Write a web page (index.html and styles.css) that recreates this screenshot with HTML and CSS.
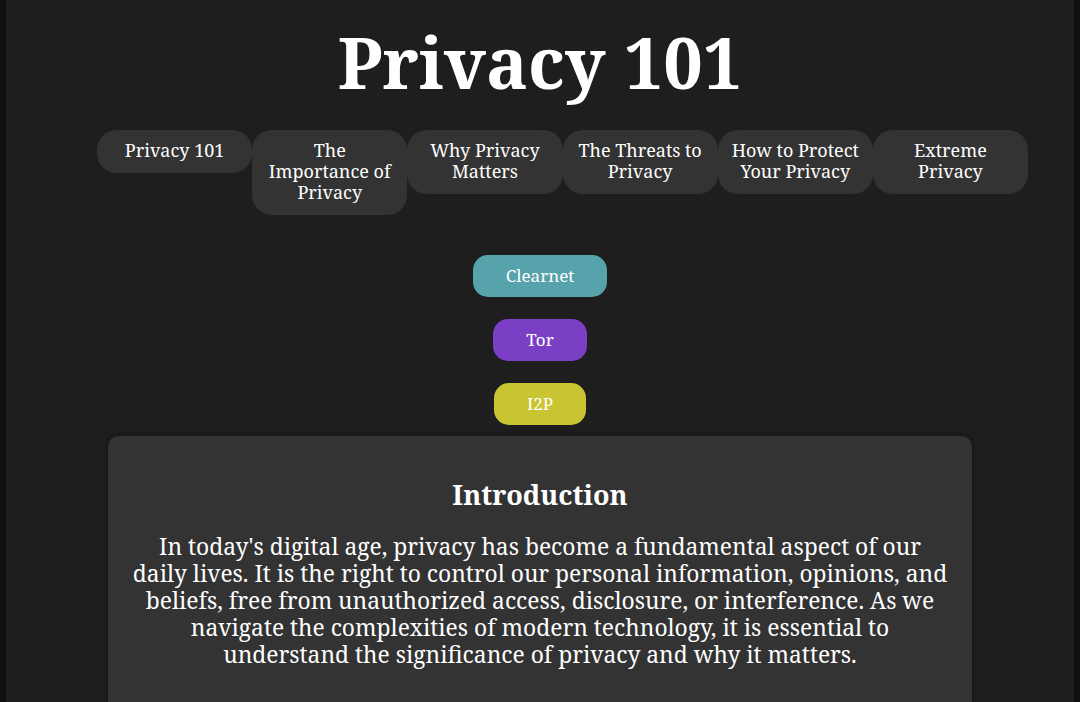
FILE: index.html
```html
<!DOCTYPE html>
<html lang="en">
<head>
<meta charset="utf-8">
<title>Privacy 101</title>
<link rel="stylesheet" href="styles.css">
</head>
<body>
<div class="page">
  <header class="header">
    <h1 class="title">Privacy 101</h1>
    <nav class="nav">
      <a class="nav-item" href="#">Privacy 101</a>
      <a class="nav-item" href="#">The Importance of Privacy</a>
      <a class="nav-item" href="#">Why Privacy Matters</a>
      <a class="nav-item" href="#">The Threats to Privacy</a>
      <a class="nav-item" href="#">How to Protect Your Privacy</a>
      <a class="nav-item" href="#">Extreme Privacy</a>
    </nav>
  </header>
  <div class="networks">
    <a class="net net-clear" href="#">Clearnet</a>
    <a class="net net-tor" href="#">Tor</a>
    <a class="net net-i2p" href="#">I2P</a>
  </div>
  <section class="card">
    <h2 class="card-title">Introduction</h2>
    <p class="card-text">In today's digital age, privacy has become a fundamental aspect of our daily lives. It is the right to control our personal information, opinions, and beliefs, free from unauthorized access, disclosure, or interference. As we navigate the complexities of modern technology, it is essential to understand the significance of privacy and why it matters.</p>
  </section>
</div>
</body>
</html>
```
FILE: styles.css
```css
html {
  background: #121212;
}
body {
  margin: 0;
  font-family: "Noto Serif", "DejaVu Serif", serif;
  color: #ffffff;
}
.page {
  margin: 0 6px;
  min-height: 702px;
  background: #1e1e1e;
  box-shadow: 0 0 8px rgba(0, 0, 0, 0.6);
  overflow: hidden;
}
.header {
  display: flex;
  flex-direction: column;
}
.title {
  margin: 20px 0 0;
  font-size: 70px;
  font-weight: 700;
  line-height: 84px;
  text-align: center;
}
.nav {
  display: flex;
  align-items: flex-start;
  margin-top: 26px;
  padding: 0 46px 0 91px;
}
.nav-item {
  flex: 1 1 0;
  padding: 10px 10px 12px;
  background: #333333;
  border-radius: 20px;
  color: #ffffff;
  text-decoration: none;
  text-align: center;
  font-size: 18px;
  line-height: 21px;
}
.networks {
  display: flex;
  flex-direction: column;
  align-items: center;
  gap: 22px;
  margin-top: 40px;
}
.net {
  display: block;
  padding: 0 33px;
  height: 42px;
  line-height: 42px;
  border-radius: 15px;
  color: #ffffff;
  text-decoration: none;
  font-size: 17px;
}
.net-clear { background: #56a3ab; }
.net-tor { background: #7b3fc6; }
.net-i2p { background: #c9c532; }
.card {
  width: 864px;
  box-sizing: border-box;
  margin: 11px auto 0;
  padding: 24px 24px 50px;
  background: #333333;
  border-radius: 10px;
  box-shadow: 0 0 6px rgba(0, 0, 0, 0.5);
  text-align: center;
}
.card-title {
  margin: 17px 0 0;
  font-size: 27px;
  font-weight: 700;
  line-height: 35px;
}
.card-text {
  margin: 21px 0 0;
  font-size: 22.8px;
  line-height: 27px;
}
```
